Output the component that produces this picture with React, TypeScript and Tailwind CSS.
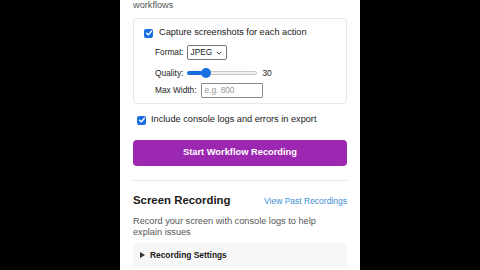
import React from 'react'

const Check = ({ className = '' }: { className?: string }) => (
  <div className={`flex h-[9px] w-[9px] shrink-0 items-center justify-center rounded-[2px] bg-[#1a6fe0] ${className}`}>
    <svg viewBox="0 0 10 10" className="h-[8px] w-[8px]">
      <path d="M2 5.2 L4.2 7.3 L8 2.8" fill="none" stroke="white" strokeWidth="1.8" strokeLinecap="round" strokeLinejoin="round" />
    </svg>
  </div>
)

export default function App() {
  return (
    <div className="h-[270px] w-[480px] overflow-hidden bg-black font-['Liberation_Sans',Arial,sans-serif]">
      <div className="mx-auto h-[270px] w-[240px] overflow-hidden bg-white px-[13px]">
        <p className="mt-0 text-[9.2px] leading-[11px] text-[#555]">workflows</p>

        <div className="mt-[7px] rounded-[4px] border border-[#e6e6e6] pb-[5px] pl-[10px] pt-[8px]">
          <div className="flex h-[12px] items-center gap-[6px]">
            <Check />
            <span className="text-[9.2px] text-[#1a1a1a]">Capture screenshots for each action</span>
          </div>

          <div className="mt-[6px] flex h-[15px] items-center gap-[3px] pl-[11px] text-[8.3px] text-[#222]">
            <span>Format:</span>
            <div className="flex h-[15px] w-[40px] items-center justify-between rounded-[2px] border border-[#777] pl-[3px] pr-[4px]">
              <span>JPEG</span>
              <svg viewBox="0 0 8 5" className="h-[4px] w-[6px]">
                <path d="M1 1 L4 4 L7 1" fill="none" stroke="#333" strokeWidth="1.3" />
              </svg>
            </div>
          </div>

          <div className="mt-[7px] flex h-[12px] items-center gap-[4px] pl-[11px] text-[8.4px] text-[#222]">
            <span>Quality:</span>
            <div className="relative flex h-[12px] w-[70px] items-center">
              <div className="h-[4px] w-full rounded-full border border-[#c8c8c8] bg-[#efefef]" />
              <div className="absolute left-0 top-[4px] h-[4px] w-[20px] rounded-l-full bg-[#1a6fe0]" />
              <div className="absolute left-[14px] top-[1px] h-[10px] w-[10px] rounded-full bg-[#1a6fe0]" />
            </div>
            <span className="ml-[1px]">30</span>
          </div>

          <div className="mt-[4px] flex h-[15px] items-center gap-[4px] pl-[11px] text-[8.3px] text-[#222]">
            <span>Max Width:</span>
            <div className="flex h-[15px] w-[62px] items-center rounded-[1px] border border-[#8a8a8a] pl-[3px] text-[#999]">
              e.g. 800
            </div>
          </div>
        </div>

        <div className="mt-[10px] flex h-[12px] items-center gap-[5px] pl-[4px]">
          <Check />
          <span className="text-[9.2px] text-[#1a1a1a]">Include console logs and errors in export</span>
        </div>

        <div className="mt-[14px] flex h-[26px] items-center justify-center rounded-[4px] bg-[#9c27b0] text-[9.3px] font-bold text-white">
          Start Workflow Recording
        </div>

        <div className="mt-[14px] h-px bg-[#e3e3e3]" />

        <div className="mt-[13px] flex h-[14px] items-center justify-between">
          <span className="text-[11.4px] font-bold text-[#1a1a1a]">Screen Recording</span>
          <span className="text-[8.5px] text-[#3a8fd6]">View Past Recordings</span>
        </div>

        <p className="mt-[8px] text-[9.2px] leading-[10.5px] text-[#555]">
          Record your screen with console logs to help explain issues
        </p>

        <div className="mt-[6px] flex h-[24px] items-center gap-[5px] rounded-[4px] bg-[#f7f7f7] pl-[7px]">
          <svg viewBox="0 0 5 6" className="h-[6px] w-[5px]">
            <path d="M0 0 L5 3 L0 6 Z" fill="#333" />
          </svg>
          <span className="text-[8.4px] font-bold text-[#1a1a1a]">Recording Settings</span>
        </div>
      </div>
    </div>
  )
}
